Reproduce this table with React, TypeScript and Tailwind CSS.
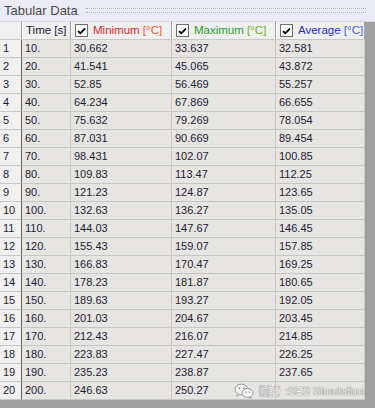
import React from 'react'

type Row = [string, string, string, string]

const ROWS: Row[] = [
  ['10.', '30.662', '33.637', '32.581'],
  ['20.', '41.541', '45.065', '43.872'],
  ['30.', '52.85', '56.469', '55.257'],
  ['40.', '64.234', '67.869', '66.655'],
  ['50.', '75.632', '79.269', '78.054'],
  ['60.', '87.031', '90.669', '89.454'],
  ['70.', '98.431', '102.07', '100.85'],
  ['80.', '109.83', '113.47', '112.25'],
  ['90.', '121.23', '124.87', '123.65'],
  ['100.', '132.63', '136.27', '135.05'],
  ['110.', '144.03', '147.67', '146.45'],
  ['120.', '155.43', '159.07', '157.85'],
  ['130.', '166.83', '170.47', '169.25'],
  ['140.', '178.23', '181.87', '180.65'],
  ['150.', '189.63', '193.27', '192.05'],
  ['160.', '201.03', '204.67', '203.45'],
  ['170.', '212.43', '216.07', '214.85'],
  ['180.', '223.83', '227.47', '226.25'],
  ['190.', '235.23', '238.87', '237.65'],
  ['200.', '246.63', '250.27', ''],
]

const COLS = 'grid grid-cols-[22px_49px_101px_104px_89px]'

function CheckBox() {
  return (
    <span className="w-[13px] h-[13px] shrink-0 bg-white border border-[#6f6f6f] flex items-center justify-center">
      <svg width="9" height="8" viewBox="0 0 9 8">
        <path d="M1 4 L3.3 6.3 L8 1.5" fill="none" stroke="#000" strokeWidth="1.8" />
      </svg>
    </span>
  )
}

function HeaderCell({ label, unit, color, unitColor }: { label: string; unit: string; color: string; unitColor: string }) {
  return (
    <div className="flex items-center gap-[5px] pl-[3px] border-l border-white border-r border-r-[#a3a3a3] overflow-hidden whitespace-nowrap">
      <CheckBox />
      <span className={color}>
        {label} <span className={unitColor}>{unit}</span>
      </span>
    </div>
  )
}

function WeChatMark() {
  return (
    <svg width="20" height="16" viewBox="0 0 20 16">
      <ellipse cx="7.5" cy="6.5" rx="6.5" ry="5.3" fill="#f4f4f4" stroke="#9a9a9a" strokeWidth="1" />
      <path d="M3.5 10.5 L2.8 13 L6 11.4" fill="#f4f4f4" stroke="#9a9a9a" strokeWidth="1" />
      <ellipse cx="13.5" cy="10" rx="5.5" ry="4.5" fill="#f4f4f4" stroke="#9a9a9a" strokeWidth="1" />
      <path d="M16.5 13.5 L17.2 15.5 L14.8 14.3" fill="#f4f4f4" stroke="#9a9a9a" strokeWidth="1" />
      <circle cx="5.3" cy="5.2" r="0.9" fill="#9a9a9a" />
      <circle cx="9.6" cy="5.2" r="0.9" fill="#9a9a9a" />
      <circle cx="11.8" cy="9.3" r="0.7" fill="#9a9a9a" />
      <circle cx="15.3" cy="9.3" r="0.7" fill="#9a9a9a" />
    </svg>
  )
}

export default function App() {
  return (
    <div className="relative w-[375px] h-[408px] overflow-hidden bg-[#a0a0a0] font-['Liberation_Sans',sans-serif] text-[11px] text-[#1c1c34]">
      {/* Title bar */}
      <div className="h-[22px] bg-[#ebebf3] flex items-center pl-[4px] pr-[9px] border-b border-[#d6d6de]">
        <span className="text-[13px] text-[#4a4a4a] leading-none">Tabular Data</span>
        <div className="flex-1 ml-[8px] h-[5px] border-y border-dotted border-[#b2b2ba]" />
      </div>

      <div className="w-[365px]">
        {/* Header */}
        <div className={`${COLS} h-[18px] bg-[#f0f0f0] border-b border-[#c8c8c8] text-[11.5px]`}>
          <div className="border-r border-[#a3a3a3]" />
          <div className="flex items-center pl-[3px] border-l border-white border-r border-r-[#a3a3a3]">Time [s]</div>
          <HeaderCell label="Minimum" unit="[°C]" color="text-[#d42a2a]" unitColor="text-[#e8552c]" />
          <HeaderCell label="Maximum" unit="[°C]" color="text-[#1f9a2a]" unitColor="text-[#6fae1c]" />
          <HeaderCell label="Average" unit="[°C]" color="text-[#2a2ad8]" unitColor="text-[#4a5af0]" />
        </div>

        {/* Data rows */}
        {ROWS.map((r, i) => (
          <div key={i} className={`${COLS} h-[18px]`}>
            <div className="bg-[#f0f0f0] border-r border-[#5e5e5e] border-b border-b-[#c8c8c8] pl-[3px] flex items-center">
              {i + 1}
            </div>
            {r.map((v, j) => (
              <div key={j} className="bg-[#e7e5e2] border-r border-b border-[#c6c6c6] pl-[3px] flex items-center">
                {v}
              </div>
            ))}
          </div>
        ))}
      </div>

      {/* Watermark */}
      <div className="absolute left-[234px] top-[383px] flex items-center gap-[5px] whitespace-nowrap text-[11px] leading-none text-[#fafafa] [text-shadow:0_0_1px_#6a6a6a,0_0_1px_#6a6a6a]">
        <WeChatMark />
        <span className="inline-block w-[21px]">
          <span className="inline-block origin-left scale-x-[0.6] text-[12px] font-['Noto_Sans_CJK_SC',sans-serif]">微信号</span>
        </span>
        <span>:SES Simulation</span>
      </div>
    </div>
  )
}
